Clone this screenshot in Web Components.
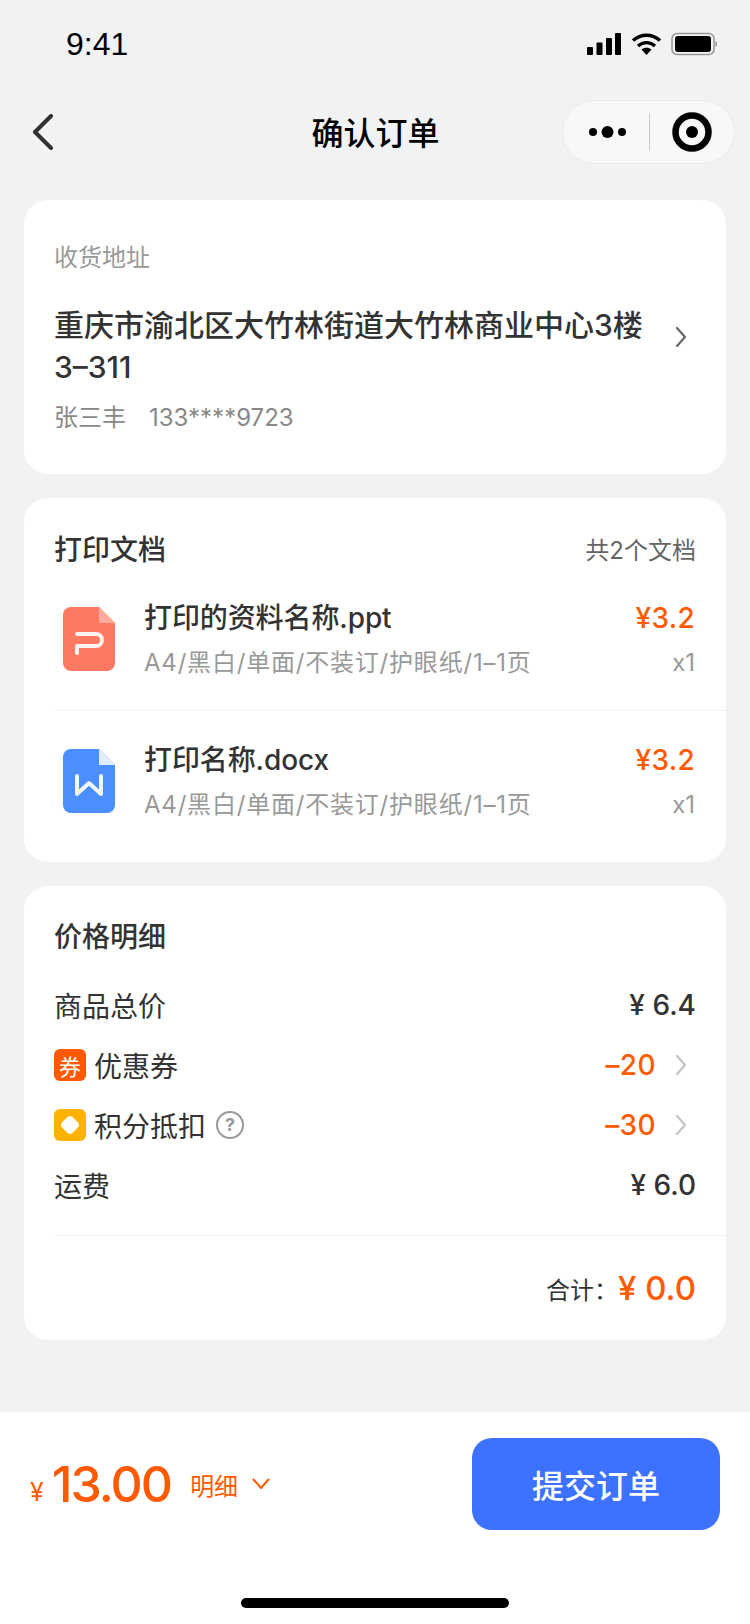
<!DOCTYPE html>
<html lang="zh">
<head>
<meta charset="utf-8">
<title>确认订单</title>
<style>
  html, body { margin: 0; padding: 0; }
  body {
    width: 750px; height: 1624px; overflow: hidden;
    display: flex; flex-direction: column;
    background: #f1f2f4; color: #333;
    font-family: Inter, "Noto Sans CJK SC", sans-serif;
  }
  main { flex: 1; display: flex; flex-direction: column; gap: 24px; padding: 24px 24px 0; }
</style>
</head>
<body>
<status-bar></status-bar>
<nav-bar>确认订单</nav-bar>
<main>
  <address-card label="收货地址" person="张三丰" phone="133****9723">重庆市渝北区大竹林街道大竹林商业中心3楼3–311</address-card>
  <docs-card title="打印文档" count="共2个文档">
    <doc-item kind="ppt" name="打印的资料名称.ppt" spec="A4/黑白/单面/不装订/护眼纸/1–1页" price="¥3.2" qty="x1"></doc-item>
    <doc-item kind="doc" divided name="打印名称.docx" spec="A4/黑白/单面/不装订/护眼纸/1–1页" price="¥3.2" qty="x1"></doc-item>
  </docs-card>
  <price-card title="价格明细" sum="¥ 0.0">
    <price-row label="商品总价" value="¥ 6.4"></price-row>
    <price-row label="优惠券" value="–20" icon="coupon" accent></price-row>
    <price-row label="积分抵扣" value="–30" icon="points" help accent></price-row>
    <price-row label="运费" value="¥ 6.0"></price-row>
  </price-card>
</main>
<bottom-bar amount="13.00"></bottom-bar>

<script>
// small helper, every element just declares its shadow markup
const shadow = ( el, html ) => { el.attachShadow( {mode: 'open'} ).innerHTML = html; };

const chevronRight = color => `<svg width="12" height="22" viewBox="0 0 12 22" fill="none" stroke="${color}" stroke-width="2.2" stroke-linecap="round" stroke-linejoin="round"><path d="M2 2 L10 11 L2 20"/></svg>`;

class StatusBar extends HTMLElement {
   connectedCallback() {
      shadow( this, `<style>
         :host { display: flex; height: 88px; box-sizing: border-box; padding: 0 32px 0 66px; justify-content: space-between; align-items: center; }
         .time { font: 32px/1 "Liberation Sans", sans-serif; color: #000; }
         svg { display: block; }
      </style>
      <span class="time">9:41</span>
      <svg width="132" height="24" viewBox="0 0 132 24">
         <rect x="1" y="15" width="6" height="8" rx="1"/>
         <rect x="10.5" y="10.5" width="6" height="12.5" rx="1"/>
         <rect x="20" y="6" width="6" height="17" rx="1"/>
         <rect x="29" y="1" width="6" height="22" rx="1"/>
         <path d="M47 8.5 C55 1.5 66 1.5 74 8.5" fill="none" stroke="#000" stroke-width="3.4"/>
         <path d="M52 14 C57 9.5 64 9.5 69 14" fill="none" stroke="#000" stroke-width="3.4"/>
         <path d="M55.5 17.5 C58.5 15 62.5 15 65.5 17.5 L60.5 23 Z"/>
         <rect x="86" y="1.5" width="42" height="21" rx="5" fill="none" stroke="#999" stroke-width="1.6"/>
         <rect x="89" y="4" width="36" height="16" rx="3"/>
         <path d="M129.5 9 V15 C131.5 14 131.5 10 129.5 9 Z" fill="#888"/>
      </svg>` );
   }
}

class NavBar extends HTMLElement {
   connectedCallback() {
      shadow( this, `<style>
         :host { display: grid; grid-template-columns: 173px 1fr 173px; align-items: center; height: 88px; padding: 0 15px; box-sizing: border-box; }
         .title { font-size: 32px; font-weight: 500; color: #000; text-align: center; padding: 0 0 3px 1px; }
         .back { margin-left: 17px; }
         .right { justify-self: end; display: flex; align-items: center; width: 173px; height: 64px; box-sizing: border-box; border: 1px solid #e9e9e9; border-radius: 32px; background: #f8f8f8; }
         svg { display: block; }
      </style>
      <svg class="back" width="22" height="36" viewBox="0 0 22 36" fill="none" stroke="#333" stroke-width="4" stroke-linecap="round" stroke-linejoin="round"><path d="M19 2 L3 18 L19 34"/></svg>
      <span class="title"><slot></slot></span>
      <div class="right">
         <svg width="171" height="62" viewBox="0 0 171 62">
            <circle cx="30" cy="31" r="4"/><circle cx="44.5" cy="31" r="6"/><circle cx="59" cy="31" r="4"/>
            <rect x="86" y="12" width="1" height="38" fill="#ccc"/>
            <circle cx="129" cy="31" r="16.5" fill="none" stroke="#000" stroke-width="6.5"/><circle cx="129" cy="31" r="6"/>
         </svg>
      </div>` );
   }
}

class AddressCard extends HTMLElement {
   connectedCallback() {
      shadow( this, `<style>
         :host { display: block; height: 274px; box-sizing: border-box; padding: 40px 30px 0; background: #fff; border-radius: 24px; }
         .label { font-size: 24px; line-height: 36px; color: #999; }
         .main { display: flex; align-items: flex-start; justify-content: space-between; margin-top: 28px; }
         .addr { width: 590px; font-size: 30px; line-height: 42px; font-weight: 500; color: #333; word-break: break-all; }
         .main svg { margin: 22px 9px 0 0; }
         .who { margin-top: 12px; font-size: 24px; line-height: 36px; color: #888; display: flex; gap: 23px; }
      </style>
      <div class="label">${this.getAttribute('label')}</div>
      <div class="main">
         <div class="addr"><slot></slot></div>
         ${chevronRight('#666')}
      </div>
      <div class="who"><span>${this.getAttribute('person')}</span><span>${this.getAttribute('phone')}</span></div>` );
   }
}

class DocsCard extends HTMLElement {
   connectedCallback() {
      shadow( this, `<style>
         :host { display: block; height: 364px; box-sizing: border-box; padding: 30px 0 0 30px; background: #fff; border-radius: 24px; }
         .head { display: flex; justify-content: space-between; align-items: center; padding-right: 30px; height: 40px; }
         .title { font-size: 28px; font-weight: 500; }
         .count { font-size: 24px; color: #666; }
      </style>
      <div class="head"><span class="title">${this.getAttribute('title')}</span><span class="count">${this.getAttribute('count')}</span></div>
      <slot></slot>` );
   }
}

class DocItem extends HTMLElement {
   connectedCallback() {
      const ppt = this.getAttribute('kind') === 'ppt';
      const base = ppt ? '#ff7861' : '#4a8eff';
      const fold = ppt ? '#ffac9c' : '#e1edff';
      const glyph = ppt
         ? '<path d="M14 27 H33 A6 6 0 0 1 33 39 H14 M14 39 V46" fill="none" stroke="#fff" stroke-opacity=".92" stroke-width="4" stroke-linecap="round" stroke-linejoin="round"/>'
         : '<path d="M14 27 V45 L26 34 L38 45 V27" fill="none" stroke="#fff" stroke-opacity=".92" stroke-width="4" stroke-linecap="round" stroke-linejoin="round"/>';
      shadow( this, `<style>
         :host { display: flex; height: 142px; box-sizing: border-box; padding: 29px 31px 0 9px; }
         :host([divided]) { border-top: 1px solid #f2f2f2; padding-top: 28px; }
         svg { display: block; flex: none; margin-top: 10px; }
         .body { flex: 1; margin-left: 29px; }
         .row { display: flex; justify-content: space-between; align-items: center; }
         .name { font-size: 28px; line-height: 42px; font-weight: 500; color: #333; letter-spacing: -.1px; }
         .price { font-size: 28px; line-height: 42px; font-weight: 500; color: #ff5a00; letter-spacing: .3px; }
         .spec, .qty { font-size: 24px; line-height: 36px; color: #999; }
         .spec { letter-spacing: .8px; }
         .row + .row { margin-top: 6px; }
      </style>
      <svg width="52" height="64" viewBox="0 0 52 64">
         <path d="M8 0 H36 L52 16 V56 A8 8 0 0 1 44 64 H8 A8 8 0 0 1 0 56 V8 A8 8 0 0 1 8 0 Z" fill="${base}"/>
         <path d="M36 0 L52 16 H36 Z" fill="${fold}"/>
         ${glyph}
      </svg>
      <div class="body">
         <div class="row"><span class="name">${this.getAttribute('name')}</span><span class="price">${this.getAttribute('price')}</span></div>
         <div class="row"><span class="spec">${this.getAttribute('spec')}</span><span class="qty">${this.getAttribute('qty')}</span></div>
      </div>` );
   }
}

class PriceCard extends HTMLElement {
   connectedCallback() {
      shadow( this, `<style>
         :host { display: block; height: 454px; box-sizing: border-box; padding: 31px 0 0 30px; background: #fff; border-radius: 24px; }
         .title { font-size: 28px; line-height: 40px; font-weight: 500; }
         .rows { display: flex; flex-direction: column; gap: 20px; margin-top: 28px; padding-right: 30px; }
         .total { display: flex; justify-content: flex-end; align-items: center; margin-top: 30px; padding: 32px 30px 0 0; border-top: 1px solid #f2f2f2; height: 40px; }
         .total span { font-size: 24px; color: #333; }
         .total b { font-size: 33px; font-weight: 500; color: #ff5a00; }
      </style>
      <div class="title">${this.getAttribute('title')}</div>
      <div class="rows"><slot></slot></div>
      <div class="total"><span>合计：</span><b>${this.getAttribute('sum')}</b></div>` );
   }
}

class PriceRow extends HTMLElement {
   connectedCallback() {
      const icon = this.getAttribute('icon');
      const accent = this.hasAttribute('accent');
      let badge = '';
      if ( icon === 'coupon' ) badge = '<span class="badge coupon">券</span>';
      if ( icon === 'points' ) badge = '<span class="badge points"><svg width="32" height="32" viewBox="0 0 32 32"><path d="M16 7 C17.5 7 18.5 8 20 9.5 L22.5 12 C24 13.5 25 14.5 25 16 C25 17.5 24 18.5 22.5 20 L20 22.5 C18.5 24 17.5 25 16 25 C14.5 25 13.5 24 12 22.5 L9.5 20 C8 18.5 7 17.5 7 16 C7 14.5 8 13.5 9.5 12 L12 9.5 C13.5 8 14.5 7 16 7 Z" fill="#fff"/></svg></span>';
      shadow( this, `<style>
         :host { display: flex; justify-content: space-between; align-items: center; height: 40px; font-size: 28px; color: #333; }
         .left, .right { display: flex; align-items: center; }
         .badge { width: 32px; height: 32px; border-radius: 6px; margin-right: 8px; display: flex; align-items: center; justify-content: center; font-size: 22px; color: #fff; }
         .coupon { background: #ff5a00; }
         .points { background: #ffb300; }
         .help { width: 28px; height: 28px; box-sizing: border-box; border: 2px solid #999; border-radius: 50%; margin-left: 10px; color: #999; font-size: 18px; font-weight: 700; line-height: 24px; text-align: center; }
         .value { font-weight: 500; }
         .accent { color: #ff5a00; margin-right: 19px; letter-spacing: .4px; }
         svg { display: block; }
         .arrow { margin-right: 9px; }
      </style>
      <span class="left">${badge}<span>${this.getAttribute('label')}</span>${this.hasAttribute('help') ? '<span class="help">?</span>' : ''}</span>
      <span class="right"><span class="value ${accent ? 'accent' : ''}">${this.getAttribute('value')}</span>${accent ? `<span class="arrow">${chevronRight('#c4c4c4')}</span>` : ''}</span>` );
   }
}

class BottomBar extends HTMLElement {
   connectedCallback() {
      shadow( this, `<style>
         :host { display: block; height: 212px; box-sizing: border-box; padding: 26px 30px 0; background: #fff; }
         .top { display: flex; justify-content: space-between; align-items: center; }
         .sum { display: flex; align-items: center; color: #ff5a00; }
         .yen { font-size: 25px; align-self: flex-end; margin-right: 8px; line-height: 34px; }
         .amount { font: 500 50px/1 Inter, sans-serif; letter-spacing: -2px; }
         .more { font-size: 24px; margin-left: 19px; margin-right: 14px; }
         svg { display: block; }
         .submit { width: 248px; height: 92px; border-radius: 20px; background: #3c72ff; color: #fff; font-size: 32px; font-weight: 500; display: flex; align-items: center; justify-content: center; }
         .home { width: 268px; height: 10px; border-radius: 5px; background: #000; margin: 68px auto 0; }
      </style>
      <div class="top">
         <div class="sum">
            <span class="yen">¥</span><span class="amount">${this.getAttribute('amount')}</span>
            <span class="more">明细</span>
            <svg width="18" height="12" viewBox="0 0 18 12" fill="none" stroke="#ff5a00" stroke-width="2" stroke-linecap="round" stroke-linejoin="round"><path d="M1.5 1.5 L9 10 L16.5 1.5"/></svg>
         </div>
         <div class="submit">提交订单</div>
      </div>
      <div class="home"></div>` );
   }
}

customElements.define( 'status-bar', StatusBar );
customElements.define( 'nav-bar', NavBar );
customElements.define( 'address-card', AddressCard );
customElements.define( 'docs-card', DocsCard );
customElements.define( 'doc-item', DocItem );
customElements.define( 'price-card', PriceCard );
customElements.define( 'price-row', PriceRow );
customElements.define( 'bottom-bar', BottomBar );
</script>
</body>
</html>
